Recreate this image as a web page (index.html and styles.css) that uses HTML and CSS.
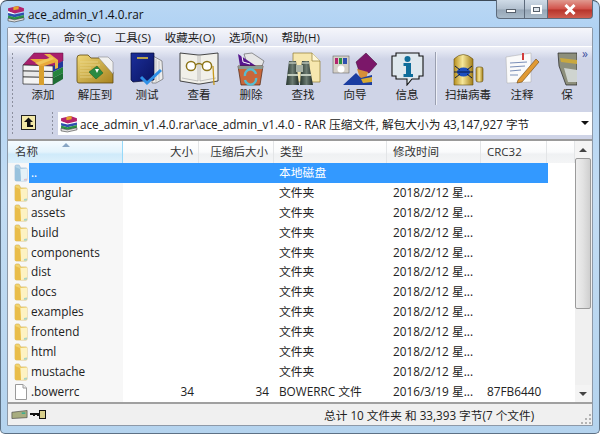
FILE: index.html
```html
<!DOCTYPE html>
<html lang="zh-CN">
<head>
    <meta charset="UTF-8">
    <title>ace_admin_v1.4.0.rar</title>
    <link rel="stylesheet" href="styles.css">
</head>
<body>
    <svg class="defs" width="0" height="0">
        <defs>
            <linearGradient id="gold" x1="0" y1="0" x2="1" y2="1">
                <stop offset="0" stop-color="#f0d778"/>
                <stop offset="1" stop-color="#a8841f"/>
            </linearGradient>
            <linearGradient id="navy" x1="0" y1="0" x2="1" y2="1">
                <stop offset="0" stop-color="#1c2f9c"/>
                <stop offset="1" stop-color="#0a1460"/>
            </linearGradient>
            <linearGradient id="can" x1="0" y1="0" x2="1" y2="0">
                <stop offset="0" stop-color="#b78f1e"/>
                <stop offset=".45" stop-color="#f6e79a"/>
                <stop offset="1" stop-color="#a47e18"/>
            </linearGradient>
            <linearGradient id="barrel" x1="0" y1="0" x2="1" y2="0">
                <stop offset="0" stop-color="#26352e"/>
                <stop offset=".5" stop-color="#6d7c72"/>
                <stop offset="1" stop-color="#1f2b26"/>
            </linearGradient>
        </defs>
        <symbol id="folder" viewBox="0 0 14 18">
            <path d="M1 2.5 Q1 1 2.5 1 L4.5 1 Q5.5 1 6 2.5 L6.5 4 L12 4 Q13 4 13 5 L13 16 Q13 17 12 17 L2.5 17 Q1 17 1 15.5 Z" fill="#f2d470" stroke="#d2ab45" stroke-width=".6"/>
            <path d="M6.5 5 L13 4.5 L13 16.5 L7 17 Z" fill="#fdf2c2"/>
            <path d="M1 3 L6 5 L7 17 L2.5 17 Q1 17 1 15.5 Z" fill="#e9bd4a"/>
            <path d="M10 15 L13 14.5 L13 16.5 L10 16.7 Z" fill="#a9d3c8"/>
        </symbol>
        <symbol id="rar" viewBox="0 0 17 17">
            <path d="M1 3 L10 1 L16 3 L16 6 L7 8 L1 6 Z" fill="#b4236e"/>
            <path d="M1 6 L7 8 L7 9 L1 7.5 Z" fill="#fff"/>
            <path d="M1 7.5 L7 9 L16 7 L16 9.5 L7 11.5 L1 10 Z" fill="#2f4fb0"/>
            <path d="M1 10 L7 11.5 L16 9.5 L16 12 L7 14 L1 12.5 Z" fill="#2c9246"/>
            <path d="M1 12.5 L7 14 L16 12 L16 14 L7 16 L1 15 Z" fill="#e4e4e4" stroke="#222" stroke-width=".5"/>
            <path d="M6 2 L11 1 L11 4 L6 5 Z" fill="#e3a52b"/>
        </symbol>
    </svg>
    <div class="window">
        <div class="titlebar">
            <svg class="title-icon" width="18" height="18"><use href="#rar"/></svg>
            <span class="title-text">ace_admin_v1.4.0.rar</span>
            <div class="caption">
                <span class="cap-btn cap-min"><i></i></span>
                <span class="cap-btn cap-max"><i></i></span>
                <span class="cap-btn cap-close">
                    <svg width="14" height="11" viewBox="0 0 14 11"><path d="M2.5 1 L11.5 10 M11.5 1 L2.5 10" stroke="#fff" stroke-width="3"/></svg>
                </span>
            </div>
        </div>

        <div class="client">
            <div class="menubar">
                <span>文件(F)</span>
                <span>命令(C)</span>
                <span>工具(S)</span>
                <span>收藏夹(O)</span>
                <span>选项(N)</span>
                <span>帮助(H)</span>
            </div>

            <div class="toolbar">
                <div class="grip"></div>
                <div class="tool">
                    <svg width="42" height="34" viewBox="0 0 42 34">
                        <path d="M1 13 L12 1 L41 1 L41 9 L31 14 Z" fill="#a91f6c" stroke="#5b1040" stroke-width=".5"/>
                        <path d="M1 13 L31 14 L31 19.5 L1 19 Z" fill="#f4f4f4" stroke="#222" stroke-width=".7"/>
                        <path d="M1 19 L31 19.5 L31 25.5 L1 25 Z" fill="#e8e8e8" stroke="#222" stroke-width=".7"/>
                        <path d="M1 25 L31 25.5 L31 32.5 L1 32 Z" fill="#f4f4f4" stroke="#222" stroke-width=".7"/>
                        <path d="M31 14 L41 9 L41 15 L31 20 Z" fill="#22379c"/>
                        <path d="M31 20 L41 15 L41 21 L31 26 Z" fill="#24843c"/>
                        <path d="M31 26 L41 21 L41 27 L31 33 Z" fill="#1e6d34"/>
                        <path d="M17 14 L22 14 L22 33 L17 33 Z" fill="#d9a02e"/>
                        <path d="M22 2 L28 2 L36 8 L36 16 L33 17 L33 10 Z" fill="#e9b545"/>
                        <path d="M8 7 L30 7 L35 10 L22 14 L17 14 L14 11 Z" fill="#e9a93a"/>
                        <path d="M13 11 L30 5 L32 7 L17 13 Z" fill="#f0c65c"/>
                    </svg>
                    <span>添加</span>
                </div>
                <div class="tool">
                    <svg width="38" height="34" viewBox="0 0 38 34">
                        <path d="M1 6 Q1 3 4 3 L12 3 L15 6 L25 6 L37 20 L37 31 L3 31 Q1 31 1 29 Z" fill="url(#gold)" stroke="#5f4a10" stroke-width=".8"/>
                        <path d="M22 5 L32 5 L37 10 L37 22 Z" fill="#f0f0f0" stroke="#777" stroke-width=".5"/>
                        <path d="M4 10 L22 10 M4 13 L24 13 M4 16 L15 16 M4 19 L13 19 M4 22 L14 22 M4 25 L16 25" stroke="#e9d68e" stroke-width=".8"/>
                        <path d="M13 20 L21 14 L27 21 L20 27 Z" fill="#2b8a42" stroke="#115a24" stroke-width=".5"/>
                        <path d="M19 17 L23 17 L21 21 Z" fill="#fff"/>
                    </svg>
                    <span>解压到</span>
                </div>
                <div class="tool">
                    <svg width="34" height="34" viewBox="0 0 34 34">
                        <path d="M23 4 L32 9 L33 27 L26 31 L22 31 Z" fill="#ececec" stroke="#555" stroke-width=".6"/>
                        <path d="M26 7 L26 30 M29 9 L29 28" stroke="#aaa" stroke-width=".6"/>
                        <path d="M1 1 L24 1 L24 28 L3 30 L1 28 Z" fill="url(#navy)" stroke="#070b33" stroke-width=".7"/>
                        <path d="M7 6 L18 6" stroke="#e3c23c" stroke-width="1.6"/>
                        <path d="M11 25 L17 31 L31 18" fill="none" stroke="#2e8fe6" stroke-width="3"/>
                    </svg>
                    <span>测试</span>
                </div>
                <div class="tool">
                    <svg width="40" height="34" viewBox="0 0 40 34">
                        <path d="M1 1 L19 3 L21 3 L39 1 L39 29 L21 32 L19 32 L1 29 Z" fill="#f1f0ea" stroke="#333" stroke-width=".9"/>
                        <path d="M3 26 L19 29 L19 3 M37 26 L21 29 L21 3" fill="none" stroke="#aaa" stroke-width=".7"/>
                        <path d="M34 14 L35 33" stroke="#c79a1e" stroke-width="1.3"/>
                        <circle cx="12" cy="14" r="4.6" fill="#fff" stroke="#8d7519" stroke-width="1.5"/>
                        <circle cx="28" cy="14" r="4.6" fill="#fff" stroke="#8d7519" stroke-width="1.5"/>
                        <path d="M16.5 13 Q20 10 23.5 13" fill="none" stroke="#8d7519" stroke-width="1.3"/>
                    </svg>
                    <span>查看</span>
                </div>
                <div class="tool">
                    <svg width="30" height="34" viewBox="0 0 30 34">
                        <path d="M8 2 L16 1 L28 9 L26 14 L12 14 Z" fill="#e6e6e6" stroke="#555" stroke-width=".6"/>
                        <path d="M2 2 L4 14 L20 14 Z" fill="#57178f"/>
                        <path d="M6 4 L7 10 L14 12" fill="none" stroke="#fff" stroke-width="1"/>
                        <path d="M2 14 L27 14 L24 33 L5 33 Z" fill="#c9673a" stroke="#4e2612" stroke-width=".7"/>
                        <path d="M2 14 L27 14 L26.5 17 L2.5 17 Z" fill="#8a9a92"/>
                        <path d="M9 24 A5.5 5.5 0 0 1 20 22 M20 26 A5.5 5.5 0 0 1 9 28" fill="none" stroke="#57bcd0" stroke-width="2.4"/>
                    </svg>
                    <span>删除</span>
                </div>
                <div class="tool">
                    <svg width="36" height="34" viewBox="0 0 36 34">
                        <path d="M8 1 L27 1 L35 9 L35 30 L8 30 Z" fill="#f6e7ae" stroke="#8d7a30" stroke-width=".7"/>
                        <path d="M27 1 L27 9 L35 9" fill="#fff8d8" stroke="#8d7a30" stroke-width=".7"/>
                        <path d="M4 9 L11 9 L12 17 L14 33 L1 33 L3 17 Z" fill="url(#barrel)"/>
                        <path d="M17 9 L24 9 L25 17 L28 33 L15 33 L16 17 Z" fill="url(#barrel)"/>
                        <rect x="11" y="13" width="7" height="7" fill="#a8b2a6"/>
                        <path d="M2.5 23 L13 23 M15.5 23 L26 23" stroke="#c2ccbe" stroke-width="2"/>
                        <path d="M4 11 L11 11 M17 11 L24 11" stroke="#b6c0b4" stroke-width="1.5"/>
                    </svg>
                    <span>查找</span>
                </div>
                <div class="tool">
                    <svg width="46" height="34" viewBox="0 0 46 34">
                        <rect x="1" y="4" width="16" height="17" fill="#d5d0c8" stroke="#555" stroke-width=".5"/>
                        <rect x="3" y="6" width="3" height="6" fill="#b3246f"/>
                        <rect x="7" y="6" width="3" height="6" fill="#2c9246"/>
                        <rect x="11" y="6" width="4" height="6" fill="#2f4fb0"/>
                        <circle cx="9" cy="17" r="3.5" fill="#fff"/>
                        <path d="M24 10 L34 1 L45 12 L37 21 L27 19 Z" fill="#7b1769" stroke="#3c0a34" stroke-width=".5"/>
                        <path d="M25 17 L36 20 L34 27 L28 26 Z" fill="#d78f3a"/>
                        <path d="M11 33 L24 21 L29 26 L40 23 L40 33 Z" fill="#1b3da0"/>
                        <path d="M29 27 L40 25 L40 30 L31 31 Z" fill="#d9ac31"/>
                    </svg>
                    <span>向导</span>
                </div>
                <div class="tool">
                    <svg width="33" height="34" viewBox="0 0 33 34">
                        <path d="M5 1 L28 1 L28 4 L32 4 L32 24 L28 24 L28 27 L21 27 L16 33 L16 27 L5 27 L5 24 L1 24 L1 4 L5 4 Z" fill="#dfe8ee" stroke="#111" stroke-width="1.1"/>
                        <circle cx="16.5" cy="7" r="3" fill="#0f6d9a"/>
                        <path d="M12.5 11 L20 11 L20 22 L22 22 L22 25 L12.5 25 L12.5 22 L15 22 L15 14 L12.5 14 Z" fill="#0f6d9a"/>
                    </svg>
                    <span>信息</span>
                </div>
                <div class="sep"></div>
                <div class="tool tool-scan">
                    <svg width="32" height="34" viewBox="0 0 32 34">
                        <path d="M2 7 Q11 -2 21 7 L21 33 L2 33 Z" fill="url(#can)" stroke="#5f4c0f" stroke-width=".6"/>
                        <ellipse cx="11.5" cy="20" rx="6.5" ry="4.5" fill="#1d4fc0"/>
                        <path d="M3 14 L8 18 M3 26 L8 22 M20 14 L15 18 M20 26 L15 22 M2 20 L21 20" stroke="#0a1a44" stroke-width="1"/>
                        <rect x="24" y="15" width="7" height="15" rx="2" fill="url(#can)" stroke="#5f4c0f" stroke-width=".6"/>
                    </svg>
                    <span>扫描病毒</span>
                </div>
                <div class="tool tool-note">
                    <svg width="35" height="34" viewBox="0 0 35 34">
                        <path d="M1 5 L26 1 L26 30 L2 31 Z" fill="#fafafa" stroke="#aaa" stroke-width=".5"/>
                        <path d="M5 11 L22 10 M5 15 L20 14 M5 19 L16 18 M5 23 L13 23" stroke="#7b8fb8" stroke-width="1.2"/>
                        <path d="M18 1 L18 8" stroke="#d23c3c" stroke-width="2"/>
                        <path d="M13 28 L31 7 L34 10 L17 30 L12 31 Z" fill="#e19a33" stroke="#6b4513" stroke-width=".6"/>
                    </svg>
                    <span>注释</span>
                </div>
                <div class="tool tool-save">
                    <svg width="21" height="34" viewBox="0 0 21 34">
                        <path d="M1 1 L20 1 L20 33 L9 33 L2 14 Z" fill="#8d8f7c" stroke="#222" stroke-width=".7"/>
                        <path d="M3 6 L20 8 L20 12 L4 10 Z" fill="#c9a83f"/>
                        <path d="M7 16 L20 18 L20 30 L11 30 Z" fill="#cfd4d0"/>
                    </svg>
                    <span>保</span>
                </div>
                <div class="more">»</div>
            </div>

            <div class="addressbar">
                <div class="grip"></div>
                <div class="up-btn">
                    <svg width="15" height="15" viewBox="0 0 15 15">
                        <rect x=".5" y=".5" width="14" height="14" fill="#f3e9a8" stroke="#222"/>
                        <path d="M7.5 2.5 L12 7 L9.5 7 L9.5 10 L12 10 L12 12 L6 12 L6 7 L3 7 Z" fill="#111"/>
                    </svg>
                </div>
                <div class="grip grip-second"></div>
                <div class="path-box">
                    <svg width="18" height="18"><use href="#rar"/></svg>
                    <span class="path-text">ace_admin_v1.4.0.rar\ace_admin_v1.4.0 - RAR 压缩文件, 解包大小为 43,147,927 字节</span>
                    <span class="path-arrow"></span>
                </div>
            </div>

            <div class="listview">
                <div class="list-main">
                    <div class="row head">
                        <div class="c-name sorted">名称</div>
                        <div class="c-size">大小</div>
                        <div class="c-packed">压缩后大小</div>
                        <div class="c-type">类型</div>
                        <div class="c-date">修改时间</div>
                        <div class="c-crc">CRC32</div>
                        <div class="c-rest"></div>
                    </div>
                    <div class="rows" id="rows"></div>
                </div>
                <div class="scrollbar">
                    <div class="sb-btn sb-up"></div>
                    <div class="sb-thumb"></div>
                    <div class="sb-btn sb-down"></div>
                </div>
            </div>

            <div class="statusbar">
                <div class="st-left">
                    <svg width="17" height="11" viewBox="0 0 19 11">
                        <path d="M1 3 L18 1 L18 9 L1 10 Z" fill="#a8ad80" stroke="#444" stroke-width=".7"/>
                        <path d="M12 4 L16 4" stroke="#2fae8f" stroke-width="1.6"/>
                    </svg>
                    <svg width="16" height="9" viewBox="0 0 16 9">
                        <path d="M0 3 L9 3 L9 6 L7 6 L7 5 L5 5 L5 6 L3 6 L3 5 L0 5 Z" fill="#111"/>
                        <rect x="9.5" y=".5" width="6" height="8" fill="#d8cf8c" stroke="#111"/>
                    </svg>
                </div>
                <div class="st-right">总计 10 文件夹 和 33,393 字节(7 个文件)</div>
                <svg class="st-grip" width="12" height="12" viewBox="0 0 12 12">
                    <path d="M9 1h2v2H9zM5 5h2v2H5zM9 5h2v2H9zM1 9h2v2H1zM5 9h2v2H5zM9 9h2v2H9z" fill="#b4b4b4"/>
                </svg>
            </div>
        </div>
    </div>

    <script>
        // Files shown in the archive
        const files = [
            { name: '..', kind: 'up', type: '本地磁盘', selected: true },
            { name: 'angular', kind: 'folder', type: '文件夹', date: '2018/2/12 星...' },
            { name: 'assets', kind: 'folder', type: '文件夹', date: '2018/2/12 星...' },
            { name: 'build', kind: 'folder', type: '文件夹', date: '2018/2/12 星...' },
            { name: 'components', kind: 'folder', type: '文件夹', date: '2018/2/12 星...' },
            { name: 'dist', kind: 'folder', type: '文件夹', date: '2018/2/12 星...' },
            { name: 'docs', kind: 'folder', type: '文件夹', date: '2018/2/12 星...' },
            { name: 'examples', kind: 'folder', type: '文件夹', date: '2018/2/12 星...' },
            { name: 'frontend', kind: 'folder', type: '文件夹', date: '2018/2/12 星...' },
            { name: 'html', kind: 'folder', type: '文件夹', date: '2018/2/12 星...' },
            { name: 'mustache', kind: 'folder', type: '文件夹', date: '2018/2/12 星...' },
            { name: '.bowerrc', kind: 'file', size: '34', packed: '34', type: 'BOWERRC 文件', date: '2016/3/19 星...', crc: '87FB6440' }
        ];

        const icons = {
            up: '<svg class="icon" width="14" height="18"><use href="#folder"/></svg>',
            folder: '<svg class="icon" width="14" height="18"><use href="#folder"/></svg>',
            file: '<svg class="icon" width="14" height="18" viewBox="0 0 14 18"><path d="M1.5 1.5 L9 1.5 L12.5 5 L12.5 16.5 L1.5 16.5 Z" fill="#fff" stroke="#9a9a9a"/><path d="M9 1.5 L9 5 L12.5 5" fill="#eee" stroke="#9a9a9a"/></svg>'
        };

        document.getElementById('rows').innerHTML = files.map(f => `
            <div class="row ${f.selected ? 'selected' : ''} ${f.kind}">
                <div class="c-name">${icons[f.kind]}<span class="fname">${f.name}</span></div>
                <div class="c-size">${f.size || ''}</div>
                <div class="c-packed">${f.packed || ''}</div>
                <div class="c-type">${f.type}</div>
                <div class="c-date">${f.date || ''}</div>
                <div class="c-crc">${f.crc || ''}</div>
            </div>
        `).join('');
    </script>
</body>
</html>
```

FILE: styles.css
```css
* {
    box-sizing: border-box;
}

html, body {
    margin: 0;
    padding: 0;
    height: 100%;
    overflow: hidden;
}

body {
    font-family: "Open Sans", "Noto Sans CJK SC", sans-serif;
    font-size: 12px;
    color: #222;
    background: #fff;
}

.defs {
    position: absolute;
}

.window {
    width: 600px;
    height: 434px;
    display: flex;
    flex-direction: column;
    border: 1px solid #5d7185;
    border-top-color: #3c4a58;
    border-radius: 7px 7px 5px 5px;
    background: linear-gradient(180deg, #b9d7f4 0, #b0d2f3 30px, #c2dcf3 200px, #b4d3ee 434px);
    padding: 0 6px 7px 6px;
}

.titlebar {
    height: 26px;
    display: flex;
    align-items: center;
    flex-shrink: 0;
    position: relative;
}

.title-icon {
    margin-right: 3px;
}

.title-text {
    font-size: 11.8px;
    color: #111;
}

.caption {
    position: absolute;
    top: -1px;
    right: 0;
    display: flex;
    height: 19px;
}

.cap-btn {
    height: 19px;
    display: flex;
    align-items: center;
    justify-content: center;
    border: 1px solid #5d6b7c;
    border-top: none;
}

.cap-min, .cap-max {
    background: linear-gradient(180deg, #cfdbe7 0, #b2c0cf 50%, #96a6b6 55%, #a9bac9 100%);
}

.cap-min {
    width: 28px;
    border-radius: 0 0 0 4px;
    border-right: none;
}

.cap-min i {
    width: 10px;
    height: 4px;
    margin-top: 4px;
    background: #fff;
    border: 1px solid #56606c;
}

.cap-max {
    width: 24px;
}

.cap-max i {
    width: 11px;
    height: 9px;
    background: #dfe6ec;
    border: 2px solid #fff;
    outline: 1px solid #56606c;
    outline-offset: -3px;
}

.cap-close {
    width: 45px;
    border-left: none;
    border-radius: 0 0 4px 0;
    background: linear-gradient(180deg, #e09a90 0, #d2524a 50%, #b7342b 55%, #cf5e50 100%);
}

.client {
    flex: 1;
    display: flex;
    flex-direction: column;
    background: #cfd5e8;
    border: 1px solid #8d99a8;
    border-radius: 2px 2px 0 0;
    min-height: 0;
}

.menubar {
    height: 18px;
    display: flex;
    align-items: center;
    padding-left: 6px;
    gap: 14px;
    flex-shrink: 0;
    background: linear-gradient(180deg, #f5f6fb 0, #dfe3f1 100%);
    font-size: 11.5px;
    color: #1a1a1a;
}

.toolbar {
    height: 62px;
    display: flex;
    flex-shrink: 0;
    padding: 5px 0 0 3px;
    position: relative;
    background: linear-gradient(180deg, #eef0f8 0, #cfd4e7 12px, #cfd4e7 100%);
    border-top: 1px solid #fff;
    overflow: hidden;
}

.grip {
    width: 3px;
    margin-right: 3px;
    background: radial-gradient(circle, #8b8f9e 0.8px, transparent 1px) 0 0 / 3px 4px;
    flex-shrink: 0;
}

.tool {
    width: 52px;
    display: flex;
    flex-direction: column;
    align-items: center;
    font-size: 11.5px;
    flex-shrink: 0;
    color: #222;
}

.tool svg {
    flex-shrink: 0;
}

.tool span {
    white-space: nowrap;
}

.tool-scan { width: 58px; }
.tool-note { width: 50px; }

.tool-save {
    width: 30px;
    padding-left: 10px;
    overflow: hidden;
}

.sep {
    width: 2px;
    margin: 0 2px 3px 2px;
    background: #9a9fb0;
    border-right: 1px solid #eef0f8;
    flex-shrink: 0;
}

.more {
    position: absolute;
    top: 1px;
    right: 4px;
    font-size: 12px;
    line-height: 12px;
    color: #3d4fa0;
}

.addressbar {
    height: 31px;
    display: flex;
    align-items: center;
    flex-shrink: 0;
    padding: 3px 0 5px 3px;
    background: #cfd4e7;
}

.addressbar .grip {
    height: 100%;
}

.up-btn {
    width: 34px;
    padding-left: 4px;
    display: flex;
    flex-shrink: 0;
}

.grip-second {
    margin-right: 4px;
}

.path-box {
    flex: 1;
    height: 100%;
    display: flex;
    align-items: center;
    gap: 2px;
    padding-left: 2px;
    background: #fff;
    font-size: 11.7px;
    position: relative;
    margin-top: 2px;
    white-space: nowrap;
    overflow: hidden;
}

.path-arrow {
    position: absolute;
    right: 3px;
    top: 9px;
    border-top: 4px solid #111;
    border-left: 4px solid transparent;
    border-right: 4px solid transparent;
}

.listview {
    flex: 1;
    display: flex;
    min-height: 0;
    background: #fff;
    border-top: 2px solid #9a9a9a;
}

.list-main {
    width: 567px;
    flex-shrink: 0;
    overflow: hidden;
}

.row {
    display: flex;
    font-size: 11.8px;
}

.row > div {
    flex-shrink: 0;
    white-space: nowrap;
    overflow: hidden;
}

.c-name { width: 115px; }
.c-size { width: 76px; text-align: right; }
.c-packed { width: 75px; text-align: right; }
.c-type { width: 113px; }
.c-date { width: 94px; }
.c-crc { width: 66px; }
.c-rest { flex: 1; }

.head {
    height: 22px;
    align-items: stretch;
    background: linear-gradient(180deg, #fff 0, #fafbfc 50%, #eff1f3 60%, #f4f5f6 100%);
    color: #333;
    font-size: 11.5px;
}

.head > div {
    line-height: 21px;
    padding: 0 5px;
    border-right: 1px solid #e3e5e7;
}

.head .sorted {
    position: relative;
    padding-left: 7px;
    background: linear-gradient(180deg, #f5fbff 0, #e3f3fc 50%, #cfeafa 60%, #dcf0fb 100%);
    border-right: 1px solid #96d9f9;
}

.head .sorted::before {
    content: "";
    position: absolute;
    top: 2px;
    left: 54px;
    border-bottom: 4px solid #87a5c4;
    border-left: 4px solid transparent;
    border-right: 4px solid transparent;
}

.head .c-type, .head .c-date, .head .c-crc {
    padding-left: 6px;
}

.rows {
    display: grid;
    grid-auto-rows: 19.9px;
}

.rows .row {
    align-items: stretch;
    line-height: 18px;
}

.rows .row > div {
    padding: 0 5px;
}

.rows .c-name {
    display: flex;
    align-items: center;
    background: #f7f7f7;
    padding: 0 0 0 6px !important;
}

.rows .c-date, .rows .c-crc {
    padding-left: 6px !important;
}

.fname {
    align-self: flex-start;
}

.icon {
    flex-shrink: 0;
    margin-right: 3px;
}

.up .icon {
    filter: hue-rotate(165deg) saturate(0.5);
}

.row.selected {
    background: linear-gradient(90deg, transparent 21px, #3399ff 21px);
    background-size: 540px 100%;
    background-repeat: no-repeat;
    color: #fff;
}

.row.selected .c-name {
    background: linear-gradient(90deg, #f7f7f7 21px, #3399ff 21px);
}

.scrollbar {
    flex: 1;
    display: flex;
    flex-direction: column;
    background: #f0f0f0;
    padding: 0 1px 0 0;
}

.sb-btn {
    height: 17px;
    flex-shrink: 0;
    display: flex;
    align-items: center;
    justify-content: center;
    background: #f4f4f4;
}

.sb-up::before {
    content: "";
    border-bottom: 4px solid #444;
    border-left: 4px solid transparent;
    border-right: 4px solid transparent;
}

.sb-down::before {
    content: "";
    border-top: 4px solid #444;
    border-left: 4px solid transparent;
    border-right: 4px solid transparent;
}

.sb-thumb {
    height: 151px;
    margin-bottom: auto;
    background: linear-gradient(90deg, #eee 0, #e2e2e2 50%, #cfcfcf 100%);
    border: 1px solid #9b9b9b;
    border-radius: 2px;
}

.statusbar {
    height: 23px;
    display: flex;
    align-items: center;
    flex-shrink: 0;
    background: #f0f0f0;
    border-top: 2px solid #a0a0a0;
    position: relative;
    font-size: 11.7px;
}

.st-left {
    width: 316px;
    display: flex;
    align-items: center;
    gap: 2px;
    padding-left: 3px;
    height: 100%;
}

.st-right {
    white-space: nowrap;
    color: #222;
}

.st-grip {
    position: absolute;
    right: 0;
    bottom: 0;
}
```
